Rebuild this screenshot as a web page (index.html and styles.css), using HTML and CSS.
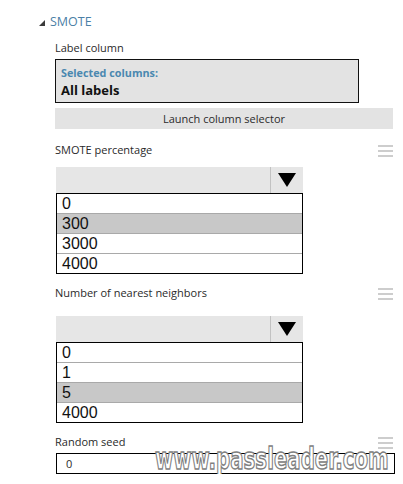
FILE: index.html
```html
<!DOCTYPE html>
<html>
<head>
<meta charset="utf-8">
<link rel="stylesheet" href="styles.css">
</head>
<body>
<div class="panel">
  <div class="section-head"><span class="caret"></span>SMOTE</div>

  <div class="label-row row-label-col"><span>Label column</span></div>
  <div class="colbox">
    <div class="sel-title">Selected columns:</div>
    <div class="sel-value">All labels</div>
  </div>
  <div class="launch">Launch column selector</div>

  <div class="label-row row-pct"><span>SMOTE percentage</span><span class="menu"><i></i><i></i><i></i></span></div>
  <div class="dropdown dd-pct"><div class="dd-value"></div><div class="dd-btn"><span class="tri"></span></div></div>
  <div class="list">
    <div class="item">0</div>
    <div class="item selected">300</div>
    <div class="item">3000</div>
    <div class="item">4000</div>
  </div>

  <div class="label-row row-nn"><span>Number of nearest neighbors</span><span class="menu"><i></i><i></i><i></i></span></div>
  <div class="dropdown dd-nn"><div class="dd-value"></div><div class="dd-btn"><span class="tri"></span></div></div>
  <div class="list">
    <div class="item">0</div>
    <div class="item">1</div>
    <div class="item selected">5</div>
    <div class="item">4000</div>
  </div>

  <div class="label-row row-seed"><span>Random seed</span><span class="menu"><i></i><i></i><i></i></span></div>
  <div class="seed">
    <span class="seed-val">0</span>
    <span class="watermark">www.passleader.com</span>
  </div>
</div>
</body>
</html>
```

FILE: styles.css
```css
html, body {
  margin: 0;
  padding: 0;
  background: #ffffff;
}
body {
  font-family: "Open Sans", "Noto Sans", sans-serif;
  color: #2b2b2b;
}
.panel {
  padding: 14px 0 0 55px;
  width: 338px;
}
.section-head {
  margin-left: -16px;
  height: 16px;
  line-height: 16px;
  font-size: 12.5px;
  color: #4b80a6;
  display: flex;
  align-items: center;
}
.caret {
  width: 0;
  height: 0;
  border-left: 6px solid transparent;
  border-bottom: 6px solid #3a3a3a;
  margin-right: 5px;
  margin-top: 2px;
}
.label-row {
  display: flex;
  justify-content: space-between;
  height: 14px;
  line-height: 14px;
  font-size: 11px;
  color: #2a2a2a;
}
.row-label-col { margin-top: 11px; }
.row-pct { margin-top: 14px; }
.row-nn { margin-top: 12px; }
.row-seed { margin-top: 12px; }
.menu {
  width: 15px;
  height: 14px;
  padding-top: 2px;
  box-sizing: border-box;
  display: flex;
  flex-direction: column;
  gap: 3px;
}
.menu i {
  display: block;
  height: 2px;
  background: #cdcdcd;
}
.colbox {
  margin-top: 4px;
  width: 304px;
  height: 44px;
  box-sizing: border-box;
  border: 1px solid #111;
  background: #e3e3e3;
  padding: 6px 0 0 5px;
}
.sel-title {
  font-size: 10.8px;
  font-weight: 700;
  line-height: 13px;
  color: #4a88b0;
}
.sel-value {
  margin-top: 3px;
  font-size: 13px;
  font-weight: 700;
  line-height: 16px;
  color: #111;
}
.launch {
  margin-top: 5px;
  width: 338px;
  height: 21px;
  line-height: 21px;
  background: #e3e3e3;
  font-size: 11px;
  text-align: center;
  color: #2b2b2b;
}
.dropdown {
  margin-left: 1px;
  width: 247px;
  height: 26px;
  background: #e6e6e6;
  display: flex;
}
.dd-pct { margin-top: 10px; }
.dd-nn { margin-top: 16px; }
.dd-value {
  width: 214px;
}
.dd-btn {
  flex: 1;
  border-left: 1px solid #c2c2c2;
  display: flex;
  align-items: center;
  justify-content: center;
}
.tri {
  width: 0;
  height: 0;
  border-left: 9.5px solid transparent;
  border-right: 9.5px solid transparent;
  border-top: 14px solid #000;
}
.list {
  margin-left: 1px;
  width: 247px;
  box-sizing: border-box;
  border: 1px solid #000;
  font-family: "Liberation Sans", Arial, sans-serif;
  font-size: 16px;
  color: #111;
}
.item {
  height: 19px;
  line-height: 19px;
  padding-left: 5px;
}
.item + .item {
  border-top: 1px solid #a9a9a9;
}
.item.selected {
  background: #c8c8c8;
}
.seed {
  position: relative;
  margin-top: 4px;
  margin-left: 1px;
  width: 339px;
  height: 21px;
  box-sizing: border-box;
  border: 1px solid #000;
  padding-left: 9px;
  font-size: 11px;
  line-height: 19px;
  color: #2b2b2b;
}
.watermark {
  position: absolute;
  left: 98px;
  bottom: -2px;
  font-family: "DejaVu Sans", sans-serif;
  font-weight: 700;
  font-size: 19.8px;
  line-height: 20px;
  color: #ffffff;
  -webkit-text-stroke: 1px #808080;
  transform: scaleY(1.55);
  transform-origin: left bottom;
  white-space: nowrap;
}
```
